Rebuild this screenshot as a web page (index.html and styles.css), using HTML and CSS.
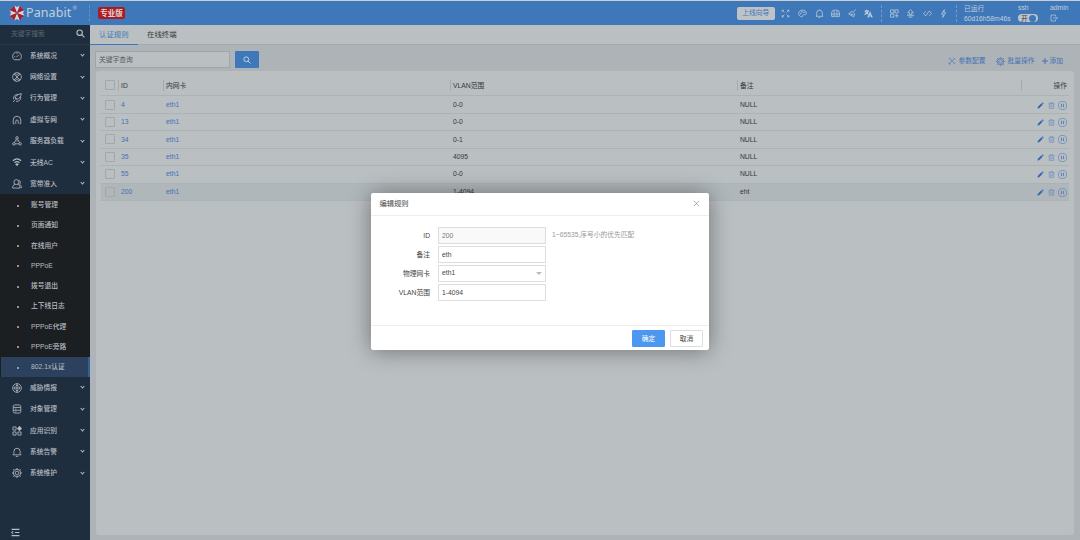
FILE: index.html
```html
<!DOCTYPE html>
<html lang="zh-CN">
<head>
    <meta charset="UTF-8">
    <meta name="viewport" content="width=device-width, initial-scale=1.0">
    <title>Panabit</title>
    <link rel="stylesheet" href="styles.css">
</head>
<body>

<header class="topbar">
    <div class="brand">
        <svg class="logo" viewBox="0 0 16 16">
            <path fill="#cfd6dd" d="M8 8 5 .5 8 2l3-1.500zM8 8l7.500-3L14 8l1.500 3zM8 8l3 7.500L8 14l-3 1.500zM8 8 .5 11 2 8 .5 5z"/>
            <path fill="#b51a22" d="M8 8 .5 5l2.700-1.300L5 .5zM8 8l3-7.500 1.800 3.200L15.500 5zM8 8l7.500 3-2.700 1.300L11 15.500zM8 8l-3 7.500-1.800-3.200L.5 11z"/>
        </svg>
        <span class="brand-name">Panabit</span><sup>®</sup>
    </div>
    <span class="edition">专业版</span>
    <div class="tools">
        <button class="guide">上线向导</button>
        <svg class="icon" viewBox="0 0 16 16"><path d="M2 5V2h3M2 2l4 4M11 2h3v3M14 2l-4 4M2 11v3h3M2 14l4-4M14 11v3h-3M14 14l-4-4"/></svg>
        <svg class="icon" viewBox="0 0 16 16"><path d="M8 2C4 2 1 4.500 1 8s3 6 6 6c2 0 1-2 1.500-3S11 10 13 10s2-1.500 2-2c0-3.500-3-6-7-6z"/><circle cx="4.500" cy="8" r=".8"/><circle cx="7" cy="5" r=".8"/><circle cx="11" cy="6" r=".8"/></svg>
        <svg class="icon" viewBox="0 0 16 16"><path d="M1.500 13h13M3 13V7a5 5 0 0 1 10 0v6M8 2V.8M6.500 15h3"/></svg>
        <svg class="icon" viewBox="0 0 16 16"><path d="M1 13V7a5 5 0 0 1 5-5h4a5 5 0 0 1 5 5v6zM1 9h14M5.500 3v10M10.500 3v10M3 13v1.500M13 13v1.500"/></svg>
        <svg class="icon" viewBox="0 0 16 16"><path d="M14 1 9.500 5M7 4l5 5-2 5L1 8.500zM4 8l6 3M5 11l1-1.500"/></svg>
        <svg class="icon bold" viewBox="0 0 16 16"><path d="M1 3.500h8M5 1.500v2M8 3.500C7 7 4 9 1 10M2.500 4C3.500 7 6 8.500 7.500 9.500M7 15l3.700-8.500L14.500 15M8.500 12.500h5"/></svg>
        <i class="split"></i>
        <svg class="icon" viewBox="0 0 16 16"><path d="M1 1.500h6V7H1zM9 1.500h5.500V7H9zM1 9h6v5.500H1zM12 9v6M9 12h6"/></svg>
        <svg class="icon" viewBox="0 0 16 16"><path d="M8 1 3 6.500h3V10h4V6.500h3zM4 10H3v2h10v-2h-1M5 14.500h6"/></svg>
        <svg class="icon" viewBox="0 0 16 16"><path d="M5 4 1 8l3 3.500h1.500L10.500 4H12l3 4-4 4"/></svg>
        <svg class="icon" viewBox="0 0 16 16"><path d="M9.500 1 4.500 9H8l-1.500 6L12 6.500H8.500z"/></svg>
        <i class="split"></i>
    </div>
    <div class="uptime"><span>已运行</span><span>60d16h58m46s</span></div>
    <div class="ssh"><span>ssh</span><span class="toggle">开<i></i></span></div>
    <div class="user">
        <span>admin</span>
        <svg class="icon" viewBox="0 0 16 16"><path d="M11 5V2H2v12h9v-3M6 8h9M12.500 5.500 15 8l-2.500 2.500"/></svg>
    </div>
</header>

<div class="layout">
    <nav class="sidebar">
        <div class="side-search">
            <span>关键字搜索</span>
            <svg class="icon bold" viewBox="0 0 16 16"><circle cx="6.500" cy="6.500" r="4.800"/><path d="m10 10 5 5"/></svg>
        </div>
        <a class="menu"><svg class="icon" viewBox="0 0 16 16"><path d="M3.500 14a7 7 0 1 1 9 0zM7 10l4-4M3.500 9H5M8 3.500V5"/></svg><span>系统概况</span><i></i></a>
        <a class="menu"><svg class="icon" viewBox="0 0 16 16"><circle cx="8" cy="8" r="7"/><path d="m3 3 10 10M13 3 3 13M5.500 2c0 3.500 5 3.500 5 0M5.500 14c0-3.500 5-3.500 5 0"/></svg><span>网络设置</span><i></i></a>
        <a class="menu"><svg class="icon" viewBox="0 0 16 16"><path d="M10 2.500C5 2 2 5 2.500 10M14 6c.5 5-3 8-7.500 7.500M5 8c1-4 4-6 10-7-1 5-3 8-7 9zM5 8l3 2M1.500 14.500l4-4"/></svg><span>行为管理</span><i></i></a>
        <a class="menu"><svg class="icon" viewBox="0 0 16 16"><path d="M2 14V8a6 6 0 0 1 12 0v6h-2M2 14h2M6 14v-4a2 2 0 0 1 4 0v4"/></svg><span>虚拟专网</span><i></i></a>
        <a class="menu"><svg class="icon" viewBox="0 0 16 16"><circle cx="8" cy="3" r="2"/><circle cx="3" cy="12.500" r="2"/><circle cx="13" cy="12.500" r="2"/><path d="M7 5 4 10.500M9 5l3 5.500M5 12.500h6M8 7v2"/></svg><span>服务器负载</span><i></i></a>
        <a class="menu"><svg class="icon bold" viewBox="0 0 16 16"><path d="M1.500 6c4-3.500 9-3.500 13 0M4 9c2.500-2 5.500-2 8 0M6.500 11.500c1-.8 2-.8 3 0L8 13z"/></svg><span>无线AC</span><i></i></a>
        <a class="menu"><svg class="icon" viewBox="0 0 16 16"><circle cx="7" cy="5" r="4"/><path d="M5 8.500C2 9.500 1 11 1 14.500h12c0-3-1-5-4-6M11 2c3 1 3 5 1 6.500 2 1 3 2.500 3 6"/></svg><span>宽带准入</span><i></i></a>
        <div class="submenu">
            <a>账号管理</a>
            <a>页面通知</a>
            <a>在线用户</a>
            <a>PPPoE</a>
            <a>拨号退出</a>
            <a>上下线日志</a>
            <a>PPPoE代理</a>
            <a>PPPoE旁路</a>
            <a class="current">802.1x认证</a>
        </div>
        <a class="menu"><svg class="icon" viewBox="0 0 16 16"><circle cx="8" cy="8" r="7"/><path d="M8 1v14M3.500 8h9M5 5.500 3 8l2 2.500M11 5.500 13 8l-2 2.500M6 4.500l2-1 2 1M6 11.500l2 1 2-1"/></svg><span>威胁情报</span><i></i></a>
        <a class="menu"><svg class="icon" viewBox="0 0 16 16"><rect x="2" y="1.500" width="12" height="13" rx="2.500"/><path d="M2 5.500h12M2 10h12M5 8h2M5 12.500h2"/></svg><span>对象管理</span><i></i></a>
        <a class="menu"><svg class="icon" viewBox="0 0 16 16"><path d="M1.500 1.500h5v5h-5zM1.500 9.500h5v5h-5zM9.500 9.500h5v5h-5z"/><path d="m12 .5 3.500 3.500L12 7.500 8.500 4z" fill="currentColor"/></svg><span>应用识别</span><i></i></a>
        <a class="menu"><svg class="icon" viewBox="0 0 16 16"><path d="M1.500 12.500h13L13 10.500V7A5 5 0 0 0 3 7v3.500zM6 15h4"/></svg><span>系统告警</span><i></i></a>
        <a class="menu"><svg class="icon" viewBox="0 0 16 16"><circle cx="8" cy="8" r="6"/><circle cx="8" cy="8" r="3"/><path d="M8 0v2M8 14v2M0 8h2M14 8h2M2.300 2.300l1.500 1.500M12.200 12.200l1.500 1.500M13.700 2.300l-1.500 1.500M3.800 12.200l-1.500 1.500"/></svg><span>系统维护</span><i></i></a>
        <svg class="icon bold collapse" viewBox="0 0 16 16"><path d="M1 2.500h14M7 8h8M1 13.500h14M4 6 1.500 8 4 10"/></svg>
    </nav>

    <main class="content">
        <div class="tabs"><a class="active">认证规则</a><a>在线终端</a></div>
        <div class="toolbar">
            <input class="query" type="text" placeholder="关键字查询">
            <button class="search"><svg class="icon bold" viewBox="0 0 16 16"><circle cx="6.500" cy="6.500" r="4.800"/><path d="m10 10 5 5"/></svg></button>
            <div class="links">
                <a><svg class="icon" viewBox="0 0 16 16"><path d="m3 3 10 10M13 3 3 13M1.500 5 5 1.500M11 1.500 14.500 5M2 11v3h3M11 14.500l3.500-3.500"/></svg>参数配置</a>
                <a><svg class="icon big" viewBox="0 0 16 16"><circle cx="8" cy="8" r="5.800"/><circle cx="8" cy="8" r="3"/><path d="M8 0v2M8 14v2M0 8h2M14 8h2M2.300 2.300l1.500 1.500M12.200 12.200l1.500 1.500M13.700 2.300l-1.500 1.500M3.800 12.200l-1.500 1.500"/></svg>批量操作</a>
                <a><svg class="icon bold" viewBox="0 0 16 16"><path d="M8 2v12M2 8h12"/></svg>添加</a>
            </div>
        </div>
        <section class="panel">
            <div class="row head"><b class="check"></b><span>ID</span><span>内网卡</span><span>VLAN范围</span><span>备注</span><span class="ops">操作</span></div>
            <div id="rows"></div>
        </section>
    </main>
</div>

<div class="dialog">
    <div class="dialog-head">编辑规则<svg class="icon" viewBox="0 0 16 16"><path d="m2 2 12 12M14 2 2 14"/></svg></div>
    <form class="dialog-body">
        <label>ID</label><input type="text" value="200" disabled><span class="hint">1~65535,序号小的优先匹配</span>
        <label>备注</label><input type="text" value="eth"><span></span>
        <label>物理网卡</label><div class="select">eth1<i></i></div><span></span>
        <label>VLAN范围</label><input type="text" value="1-4094"><span></span>
    </form>
    <div class="dialog-foot"><button class="ok">确定</button><button>取消</button></div>
</div>

<script>
    const rules = [
        ['4', 'eth1', '0-0', 'NULL'],
        ['13', 'eth1', '0-0', 'NULL'],
        ['34', 'eth1', '0-1', 'NULL'],
        ['35', 'eth1', '4095', 'NULL'],
        ['55', 'eth1', '0-0', 'NULL'],
        ['200', 'eth1', '1-4094', 'eht']
    ];
    const ops = `<span class="ops">
        <svg class="icon pen" viewBox="0 0 16 16"><path d="M1 15l1-4 8-8 3 3-8 8zM11 2l1.500-1.500 3 3L14 5z"/></svg>
        <svg class="icon" viewBox="0 0 16 16"><path d="M1 4h14M5 4V1.500h6V4M3 4v10.500h10V4M6.500 7v5M9.500 7v5"/></svg>
        <svg class="icon pause" viewBox="0 0 16 16"><circle cx="8" cy="8" r="7.300"/><path d="M6.200 5v6M9.800 5v6" stroke-width="2"/></svg>
    </span>`;

    document.getElementById('rows').innerHTML = rules.map((r, i) =>
        `<div class="row${i === rules.length - 1 ? ' selected' : ''}"><b class="check"></b>` +
        `<a>${r[0]}</a><a>${r[1]}</a><span>${r[2]}</span><span>${r[3]}</span>${ops}</div>`
    ).join('');
</script>

</body>
</html>
```
FILE: styles.css
```css
* {
    box-sizing: border-box;
}
body {
    margin: 0;
    height: 540px;
    overflow: hidden;
    padding-top: 1px;
    background: #c9ced2;
    color: #34383b;
    font-family: "Liberation Sans", "Noto Sans CJK SC", sans-serif;
    font-size: 6.75px;
    line-height: 1;
}
button, input {
    font: inherit;
    color: inherit;
    margin: 0;
}
i {
    font-style: normal;
}
.icon {
    display: block;
    flex: none;
    width: 9px;
    height: 9px;
    fill: none;
    stroke: currentColor;
    stroke-width: 1.3;
}
.icon.bold {
    stroke-width: 2;
}

/* top bar */
.topbar {
    display: flex;
    align-items: center;
    height: 24px;
    background: #3f78b9;
    color: #c3cfdb;
}
.brand {
    display: flex;
    align-items: center;
    width: 90px;
    height: 16px;
    padding-left: 9px;
    border-right: 1px dashed #6492c3;
}
.logo {
    width: 16px;
    height: 16px;
}
.brand-name {
    margin-left: 1px;
    font-family: "Noto Sans", sans-serif;
    font-size: 12.5px;
    letter-spacing: 0.1px;
}
.brand sup {
    font-size: 6px;
    margin: -10px 0 0 1px;
}
.edition {
    margin-left: 8px;
    width: 27px;
    height: 12px;
    border-radius: 2px;
    background: #ab1b22;
    color: #e2d5d5;
    font-weight: bold;
    font-size: 7.5px;
    line-height: 13px;
    text-align: center;
}
.tools {
    display: flex;
    align-items: center;
    gap: 7.6px;
    margin-left: auto;
}
.guide {
    width: 38px;
    height: 13px;
    margin-right: -1px;
    padding: 1px 0 0;
    border: 0;
    border-radius: 2px;
    background: #bec3c7;
    color: #3f78b9;
}
.split {
    height: 17px;
    border-left: 1px dashed #6f9bcb;
}
.uptime, .ssh, .user {
    display: flex;
    flex-direction: column;
    justify-content: space-between;
    height: 19px;
    padding: 1px 0;
    line-height: 7px;
}
.uptime {
    width: 54px;
    margin-left: 7px;
}
.ssh {
    width: 32px;
}
.ssh, .user {
    height: 20px;
}
.user {
    width: 30px;
}
.user .icon {
    width: 8px;
    height: 8px;
}
.toggle {
    display: flex;
    align-items: center;
    justify-content: space-between;
    width: 20px;
    height: 8px;
    padding: 0 2px 0 3px;
    border-radius: 4px;
    background: #bec3c7;
    color: #34383b;
}
.toggle i {
    width: 7px;
    height: 7px;
    border-radius: 50%;
    background: #3f78b9;
}

.layout {
    display: flex;
    height: 515px;
}

/* sidebar */
.sidebar {
    display: flex;
    flex-direction: column;
    width: 90px;
    background: #1f2e3f;
    color: #b7bdc3;
}
.side-search {
    display: flex;
    justify-content: space-between;
    height: 20px;
    padding: 6px 5px 0 11px;
    border-bottom: 1px solid #2b3a4a;
    color: #5c6771;
}
.side-search .icon {
    margin-top: -2px;
    color: #b7bdc3;
}
.menu {
    display: flex;
    align-items: center;
    height: 21.35px;
    padding: 0 6px 0 12px;
    font-weight: 500;
}
.menu .icon {
    width: 10px;
    height: 10px;
}
.menu span {
    flex: 1;
    margin-left: 8px;
    padding-top: 1px;
}
.menu i {
    width: 3px;
    height: 3px;
    margin-top: -2px;
    border: solid #b7bdc3;
    border-width: 0 1px 1px 0;
    transform: rotate(45deg);
}
.submenu {
    padding-top: 0.5px;
    background: #1c1f22;
    font-weight: 500;
}
.submenu a {
    display: flex;
    align-items: center;
    height: 20.25px;
    padding-top: 1px;
}
.submenu a::before {
    content: "";
    width: 2px;
    height: 2px;
    margin: 0 12px 0 17px;
    border-radius: 1px;
    background: #b7bdc3;
}
.submenu .current {
    margin-left: 1px;
    background: #2b415d;
    border-right: 2px solid #365f94;
}
.submenu .current::before {
    margin-left: 16px;
}
.collapse {
    margin: auto 0 3px 11px;
}

/* content */
.content {
    flex: 1;
    display: flex;
    flex-direction: column;
    background: #aeb3b8;
}
.tabs {
    display: flex;
    height: 20px;
    background: #babfc2;
    border-bottom: 1px solid #a4abaf;
    font-size: 7.4px;
}
.tabs a {
    width: 48px;
    padding: 6px 0 0 9px;
    height: 20px;
}
.tabs a + a {
    width: 60px;
}
.tabs .active {
    color: #4478b8;
    border-bottom: 1px solid #3f78b9;
}
.toolbar {
    display: flex;
    height: 26px;
    padding: 6px 16px 0 5px;
}
.query {
    width: 135px;
    height: 17px;
    padding: 0 3px;
    border: 1px solid #9ea5ab;
    background: #babfc2;
}
.query::placeholder {
    color: #565b5f;
}
.search {
    display: grid;
    place-items: center;
    width: 24px;
    height: 17px;
    margin-left: 5px;
    padding: 0;
    border: 0;
    border-radius: 1px;
    background: #3f78b9;
    color: #c3cfdb;
}
.search .icon {
    width: 8px;
    height: 8px;
}
.links {
    display: flex;
    align-items: center;
    gap: 11px;
    margin-left: auto;
    padding-right: 1px;
    color: #4271b5;
}
.links a {
    display: flex;
    align-items: center;
    gap: 2px;
}
.links a + a + a {
    margin-left: -4px;
    gap: 0;
}
.links .icon {
    width: 8px;
    height: 8px;
}
.links .big {
    width: 9px;
    height: 9px;
}
.panel {
    flex: 1;
    margin: 0 6px 5px;
    padding: 4px 5px;
    border-radius: 3px;
    background: #babfc2;
}
.row {
    display: grid;
    grid-template-columns: 17px 45px 287px 287px 284px 1fr;
    align-items: center;
    height: 17.45px;
    border-bottom: 1px solid #adb2b6;
}
.row > a, .row > span {
    padding: 1px 0 0 3px;
}
.row > a {
    color: #4271b5;
}
.row.head {
    height: 21.4px;
}
.row.head > span {
    height: 11px;
    padding: 0 0 0 2px;
    line-height: 11px;
    border-left: 1px solid #a5aaae;
}
.row.selected {
    background: #afb7ba;
}
.check {
    width: 10px;
    height: 10px;
    margin-left: 4px;
    border: 1px solid #a2a7ab;
    border-radius: 1px;
}
.row > .ops, .row.head > .ops {
    display: flex;
    align-items: center;
    justify-content: flex-end;
    gap: 4px;
    padding-right: 2px;
}
.ops {
    color: #6283c0;
}
.head .ops {
    color: #34383b;
}
.ops .icon {
    width: 7px;
    height: 7px;
}
.ops .pen {
    fill: #3468b5;
    stroke: none;
}
.ops .pause {
    width: 9px;
    height: 9px;
    margin-left: -1px;
}

/* edit dialog */
.dialog {
    position: absolute;
    left: 371px;
    top: 193px;
    width: 338px;
    height: 157px;
    display: flex;
    flex-direction: column;
    border-radius: 2px;
    background: #fff;
    color: #444;
    box-shadow: 0 1px 22px rgba(0, 0, 0, 0.4);
}
.dialog-head {
    display: flex;
    align-items: center;
    justify-content: space-between;
    height: 22.5px;
    padding: 0 9.5px 0 8.5px;
    border-bottom: 1px solid #eee;
    font-size: 7.25px;
}
.dialog-head .icon {
    width: 7px;
    height: 7px;
    color: #777;
}
.dialog-body {
    flex: 1;
    display: grid;
    grid-template-columns: 59px 108px 1fr;
    grid-auto-rows: 17px;
    column-gap: 8px;
    row-gap: 2.1px;
    align-items: center;
    padding-top: 11.5px;
}
.dialog-body label {
    padding-top: 1px;
    text-align: right;
}
.dialog-body input, .select {
    width: 108px;
    height: 17px;
    padding: 0 3px;
    border: 1px solid #ddd;
    background: #fff;
}
.dialog-body input:disabled {
    background: #f9f9f9;
    color: #777;
}
.select {
    display: flex;
    align-items: center;
    justify-content: space-between;
}
.select i {
    border: 3px solid transparent;
    border-top-color: #bbb;
    border-bottom: 0;
}
.hint {
    margin-left: -2px;
    color: #999;
}
.dialog-foot {
    display: flex;
    justify-content: flex-end;
    gap: 5px;
    height: 25px;
    padding: 4px 6px 4px 0;
    border-top: 1px solid #eee;
}
.dialog-foot button {
    width: 33px;
    height: 17px;
    padding: 1px 0 0;
    border: 1px solid #ddd;
    border-radius: 1px;
    background: #fff;
}
.dialog-foot .ok {
    border-color: #4c98f0;
    background: #4c98f0;
    color: #fff;
}
```
